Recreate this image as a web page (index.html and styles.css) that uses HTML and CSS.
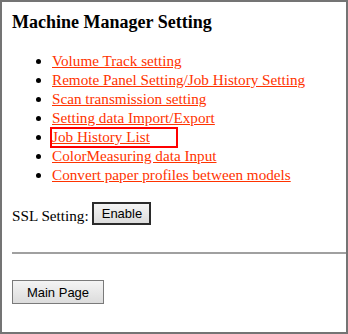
FILE: index.html
```html
<!DOCTYPE html>
<html lang="en">
<head>
    <meta charset="UTF-8">
    <title>Machine Manager Setting</title>
    <link rel="stylesheet" href="styles.css">
</head>
<body>
    <div class="frame">
        <h3 class="title">Machine Manager Setting</h3>

        <ul class="menu">
            <li><a href="#">Volume Track setting</a></li>
            <li><a href="#">Remote Panel Setting/Job History Setting</a></li>
            <li><a href="#">Scan transmission setting</a></li>
            <li><a href="#">Setting data Import/Export</a></li>
            <li class="marked"><a href="#">Job History List</a><span class="mark"></span></li>
            <li><a href="#">ColorMeasuring data Input</a></li>
            <li><a href="#">Convert paper profiles between models</a></li>
        </ul>

        <div class="ssl">
            SSL Setting: <button class="btn btn-enable">Enable</button>
        </div>

        <hr class="divider">

        <div class="bottom">
            <button class="btn btn-main">Main Page</button>
        </div>
    </div>
</body>
</html>
```

FILE: styles.css
```css
html, body {
    margin: 0;
    padding: 0;
    height: 100%;
}

body {
    font-family: "Liberation Serif", "Times New Roman", serif;
    font-size: 15.2px;
    color: #000;
    background: #fff;
}

.frame {
    box-sizing: border-box;
    height: 334px;
    border: 2px solid #747474;
    padding: 10px 0 0 10px;
}

.title {
    font-size: 18px;
    font-weight: bold;
    margin: 0 0 18px 0;
    line-height: 21px;
}

.menu {
    margin: 0 0 16px 0;
    padding-left: 40px;
}

.menu li {
    line-height: 19px;
}

.menu a {
    color: #ff3300;
    text-decoration: underline;
}

/* red box drawn over the selected entry */
.marked {
    position: relative;
}

.mark {
    position: absolute;
    left: -2px;
    top: 0;
    width: 124px;
    height: 17px;
    border: 2px solid #f00;
}

.ssl {
    padding-top: 2px;
    line-height: 19px;
}

.btn {
    font-family: "Liberation Sans", Arial, sans-serif;
    font-size: 13px;
    color: #000;
    background: linear-gradient(#f4f4f4, #dcdcdc);
    cursor: pointer;
}

.btn-enable {
    width: 59px;
    height: 23px;
    padding: 0;
    border: 2px solid #2b2b2b;
    vertical-align: 3px;
}

.divider {
    margin: 27px 0 0 0;
    border: 0;
    border-top: 2px solid #a0a0a0;
}

.bottom {
    padding-top: 26px;
}

.btn-main {
    width: 92px;
    height: 24px;
    padding: 0;
    border: 1px solid #7a7a7a;
}
```
